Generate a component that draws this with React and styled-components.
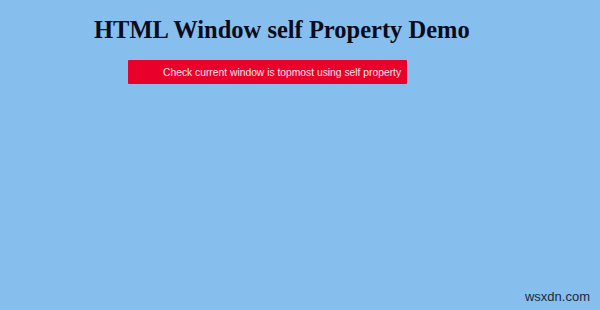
import React from "react";
import styled, { createGlobalStyle } from "styled-components";

const GlobalStyle = createGlobalStyle`
  html, body {
    margin: 0;
    padding: 0;
    background: #86bfee;
  }
`;

const Page = styled.div`
  position: relative;
  width: 600px;
  height: 310px;
  background: #86bfee;
  display: flex;
  flex-direction: column;
  padding: 16px 0 0 94px;
  box-sizing: border-box;
`;

const Heading = styled.h1`
  margin: 0;
  font-family: "Liberation Serif", "Times New Roman", serif;
  font-weight: 700;
  font-size: 24.5px;
  line-height: 28px;
  color: #0b0b1c;
`;

const ActionButton = styled.button`
  margin: 16px 0 0 34px;
  width: 279px;
  height: 24px;
  border: none;
  border-radius: 1px;
  background: #e9002b;
  color: #fbe6ea;
  font-family: "Liberation Sans", Arial, sans-serif;
  font-size: 10.3px;
  text-align: left;
  padding: 0 0 0 35px;
  cursor: pointer;
`;

const Watermark = styled.span`
  position: absolute;
  right: 10px;
  bottom: 6px;
  font-family: "Liberation Sans", Arial, sans-serif;
  font-size: 13px;
  color: #1c2a3a;
`;

const App = () => {
  return (
    <>
      <GlobalStyle />
      <Page>
        <Heading>HTML Window self Property Demo</Heading>
        <div>
          <ActionButton>Check current window is topmost using self property</ActionButton>
        </div>
        <Watermark>wsxdn.com</Watermark>
      </Page>
    </>
  );
};

export default App;
